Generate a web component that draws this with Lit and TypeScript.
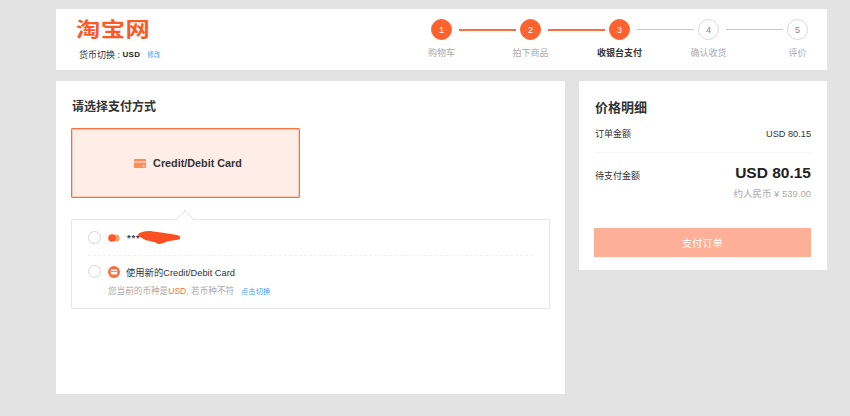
import { LitElement, html, css } from "lit";
import { customElement } from "lit/decorators.js";

const steps = ["购物车", "拍下商品", "收银台支付", "确认收货", "评价"];

@customElement("app-root")
export class AppRoot extends LitElement {
  static styles = css`
    :host {
      display: block;
      height: 416px;
      overflow: hidden;
      background: #e3e3e3;
      font-family: "Liberation Sans", "Noto Sans CJK SC", sans-serif;
      color: #333;
    }
    .page { padding: 9px 23px 0 56px; display: flex; flex-direction: column; gap: 11px; }
    .head {
      height: 61px; background: #fff; display: flex; justify-content: space-between;
      padding: 0 19px 0 21px;
    }
    .brand { display: flex; flex-direction: column; }
    .logo {
      font-size: 24px; line-height: 24px; font-weight: 700; color: #fb5a27;
      margin: 9px 0 0 -1px; letter-spacing: 0.5px; transform: scale(1.01, 0.86); transform-origin: 0 50%;
    }
    .currency {
      font-size: 9px; line-height: 12px; margin: 7px 0 0 2px; color: #333;
      display: flex; align-items: center; white-space: pre;
    }
    .currency b { font-size: 8px; letter-spacing: 0.3px; color: #222; }
    .currency a { font-size: 6.5px; color: #3d9bf5; margin-left: 7px; }
    .steps {
      display: grid; margin-top: 10px; align-content: start;
      grid-template-columns: 21px 68px 21px 68px 21px 68px 21px 68px 21px;
      grid-template-rows: 21px auto; row-gap: 7px; align-items: center;
    }
    .dot {
      width: 21px; height: 21px; box-sizing: border-box; border-radius: 50%;
      display: flex; align-items: center; justify-content: center;
      font-size: 9px; border: 1px solid #d9d9d9; color: #888; background: #fff;
    }
    .dot.on { background: #fb6230; border-color: #fb6230; color: #fff; }
    .line { height: 1px; background: #c8c8c8; margin: 0 4px 0 7px; }
    .line.on { height: 2px; background: #fb6e40; }
    .label {
      grid-row: 2; justify-self: center; white-space: nowrap;
      font-size: 9px; line-height: 12px; color: #aaa;
    }
    .label.cur { color: #333; font-weight: 700; }
    .main { display: flex; gap: 14px; align-items: flex-start; }
    .pay { width: 509px; height: 313px; box-sizing: border-box; background: #fff; padding: 18px 15px 0; }
    h2 { margin: 0; font-size: 12px; line-height: 16px; font-weight: 700; color: #333; }
    .pay h2 { margin-left: 1px; }
    .card {
      width: 229px; height: 70px; box-sizing: border-box; margin: 13px 0 0 0; padding-left: 5px;
      border: 1px solid #fb6f40; box-shadow: inset 0 0 0 1px rgba(253, 127, 85, 0.35);
      background: #ffeee7; border-radius: 1px;
      display: flex; align-items: center; justify-content: center; gap: 7px;
      font-size: 10.8px; font-weight: 700; color: #333;
    }
    .box { position: relative; margin: 21px 0 0; height: 90px; box-sizing: border-box; border: 1px solid #e8e8e8; width: 479px; }
    .arrow {
      position: absolute; left: 106px; top: -7px; width: 13px; height: 13px; background: #fff;
      border-top: 1px solid #e8e8e8; border-left: 1px solid #e8e8e8; transform: rotate(45deg);
    }
    .row1 {
      position: relative; height: 35px; margin: 0 16px; display: flex; align-items: center;
      border-bottom: 1px dashed #f0f0f0;
    }
    .radio {
      width: 13px; height: 13px; border: 1px solid #d5d5d5; border-radius: 50%;
      box-sizing: border-box; flex: none; background: #fff;
    }
    .mc { margin-left: 7px; flex: none; display: block; }
    .stars { font-size: 9.5px; font-weight: 700; margin-left: 7px; color: #444; letter-spacing: 0.8px; }
    .scribble { margin-left: -3px; flex: none; display: block; }
    .row2 { margin: 8px 16px 0; display: flex; align-items: center; height: 15px; font-size: 9.3px; color: #333; }
    .new { margin-left: 7px; flex: none; display: block; }
    .txt { margin-left: 6px; }
    .note { margin: 6px 16px 0 36px; font-size: 8.6px; line-height: 12px; color: #aaa; white-space: nowrap; }
    .note em { font-style: normal; color: #fb6f40; }
    .note a { font-size: 7.3px; color: #3d9bf5; margin-left: 7px; }
    .sum { width: 248px; height: 189px; box-sizing: border-box; background: #fff; padding: 19px 16px 0 16px; }
    .sum h2 { font-size: 13px; }
    .line-item { display: flex; justify-content: space-between; font-size: 9px; line-height: 12px; margin: 12px 0 0 -1px; padding: 0 0 12px 1px; border-bottom: 1px solid #f5f5f5; }
    .line-item span:last-child { font-size: 9.2px; }
    .due { display: flex; justify-content: space-between; margin-top: 10px; }
    .due .k { font-size: 9px; line-height: 12px; margin-top: 7px; }
    .due .v { font-size: 15.5px; line-height: 20px; font-weight: 700; color: #222; }
    .approx { text-align: right; font-size: 9.5px; line-height: 12px; color: #aaa; margin-top: 5px; }
    .btn {
      height: 29px; margin: 28px 0 0 -1px; background: #fdb097; color: #fff; font-size: 10px;
      display: flex; align-items: center; justify-content: center; letter-spacing: 0.2px;
    }
  `;

  render() {
    return html`
      <div class="page">
        <header class="head">
          <div class="brand">
            <div class="logo">淘宝网</div>
            <div class="currency">货币切换 : <b>USD</b><a>修改</a></div>
          </div>
          <div class="steps">
            ${steps.map((_, i) => html`
              <div class="dot ${i < 3 ? "on" : ""}">${i + 1}</div>
              ${i < 4 ? html`<div class="line ${i < 2 ? "on" : ""}"></div>` : ""}
            `)}
            ${steps.map((s, i) => html`
              <div class="label ${i === 2 ? "cur" : ""}" style="grid-column:${i * 2 + 1}">${s}</div>
            `)}
          </div>
        </header>
        <div class="main">
          <section class="pay">
            <h2>请选择支付方式</h2>
            <div class="card">
              <svg width="12" height="9" viewBox="0 0 12 9">
                <path fill="#ff8a5c" d="M1 0h10a1 1 0 0 1 1 1v1.4H0V1a1 1 0 0 1 1-1zM0 3.4h12V8a1 1 0 0 1-1 1H1a1 1 0 0 1-1-1z"/>
                <rect x="8.8" y="6.2" width="1.6" height="1.6" fill="#fff"/>
              </svg>
              <span>Credit/Debit Card</span>
            </div>
            <div class="box">
              <div class="arrow"></div>
              <div class="row1">
                <span class="radio"></span>
                <svg class="mc" width="12" height="8" viewBox="0 0 12 8">
                  <circle cx="8" cy="4" r="3.6" fill="#ff9a6e"/>
                  <circle cx="4" cy="4" r="3.8" fill="#fb5a27"/>
                </svg>
                <span class="stars">***</span>
                <svg class="scribble" width="42" height="13" viewBox="0 0 42 13">
                  <path fill="#fb4f22" d="M0 3C5 0 10-.5 15 .5c8 1 18 2 26 4 1.5 1 1.5 3.5 0 4-4 1-9 1-12 2-4 2-8 3-10 2-2-2-6-2-10-3C5 8 1 6 0 3z"/>
                </svg>
              </div>
              <div class="row2">
                <span class="radio"></span>
                <svg class="new" width="12" height="12" viewBox="0 0 12 12">
                  <circle cx="6" cy="6" r="6" fill="#fb6f40"/>
                  <rect x="2.8" y="3.4" width="6.4" height="5.2" rx="1" fill="#fff"/>
                  <rect x="2.8" y="4.9" width="6.4" height="0.9" fill="#fb6f40"/>
                </svg>
                <span class="txt">使用新的Credit/Debit Card</span>
              </div>
              <div class="note">您当前的币种是<em>USD</em>, 若币种不符<a>点击切换</a></div>
            </div>
          </section>
          <aside class="sum">
            <h2>价格明细</h2>
            <div class="line-item"><span>订单金额</span><span>USD 80.15</span></div>
            <div class="due"><span class="k">待支付金额</span><span class="v">USD 80.15</span></div>
            <div class="approx">约人民币 ¥ 539.00</div>
            <div class="btn">支付订单</div>
          </aside>
        </div>
      </div>
    `;
  }
}
